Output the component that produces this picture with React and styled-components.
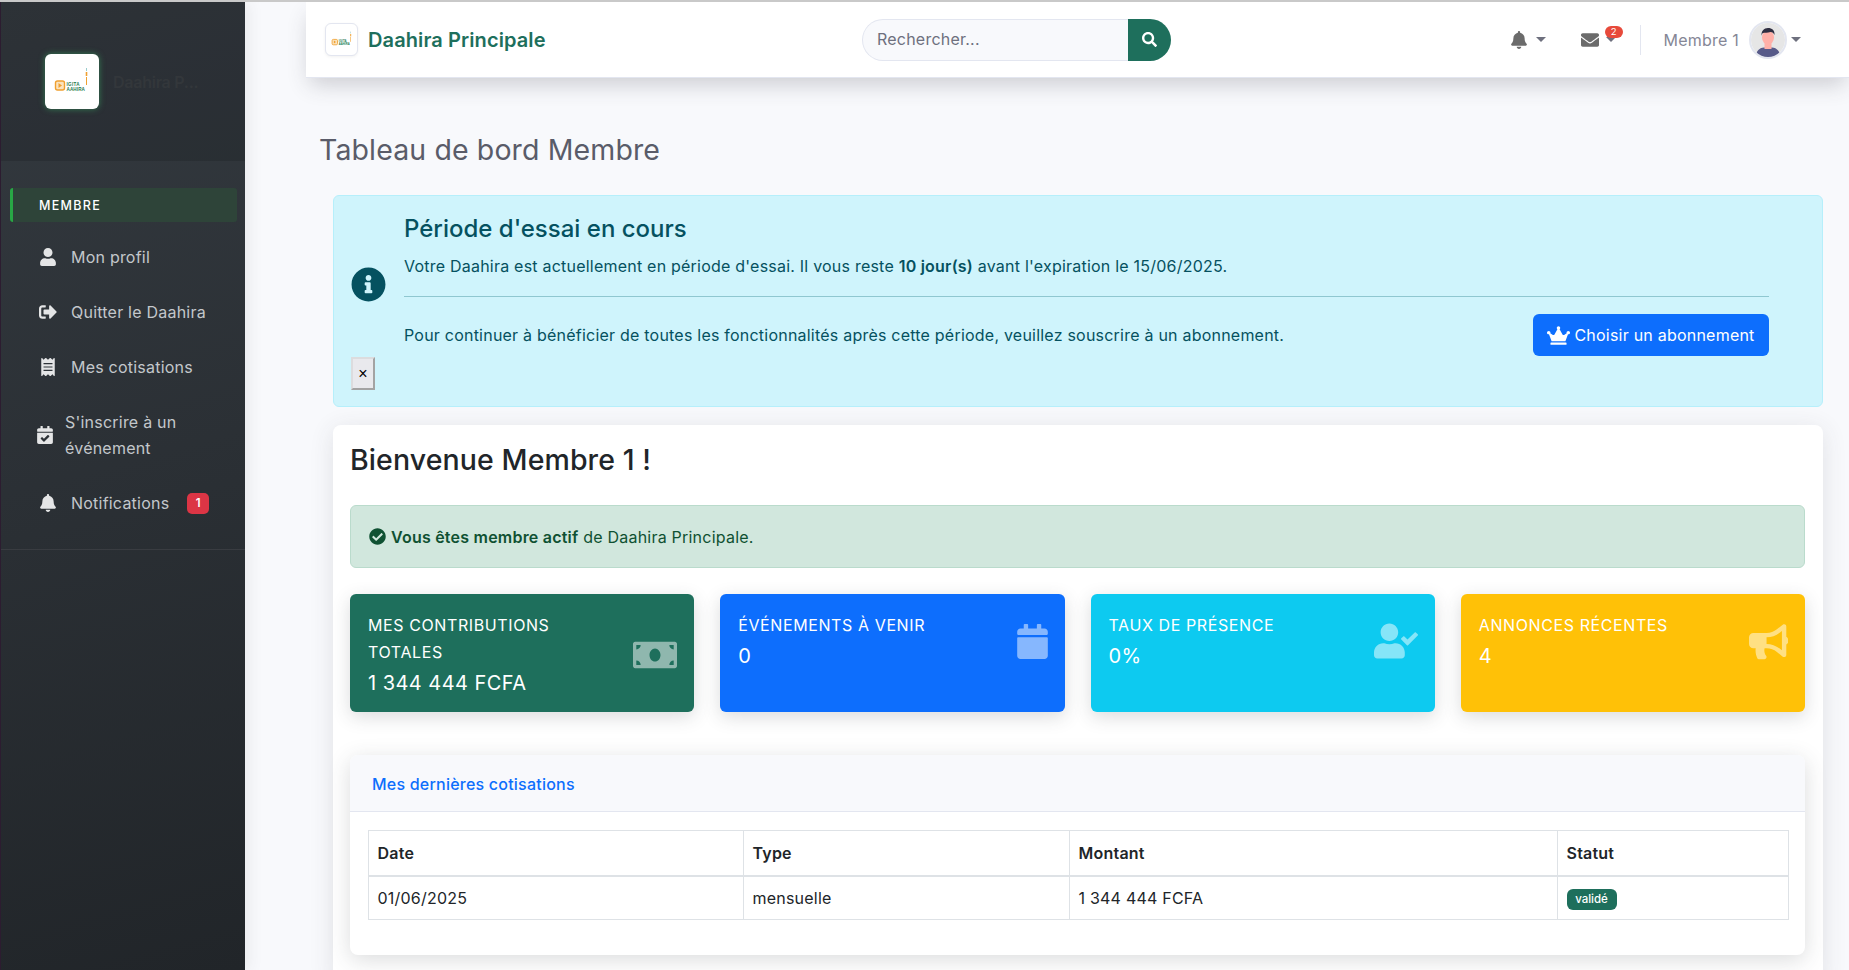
import React from "react";
import styled, { createGlobalStyle } from "styled-components";
import {
  FaUser, FaSignOutAlt, FaReceipt, FaCalendarCheck, FaBell, FaEnvelope, FaSearch,
  FaInfoCircle, FaCrown, FaCheckCircle, FaMoneyBill, FaCalendar, FaUserCheck, FaBullhorn,
} from "react-icons/fa";

const GREEN = "#1e6f5c";

const Global = createGlobalStyle`
  * { box-sizing: border-box; }
  html, body { margin: 0; padding: 0; height: 100%; overflow: hidden; }
  body {
    font-family: Inter, "Noto Sans", "Liberation Sans", sans-serif;
    font-size: 16px;
    letter-spacing: 0.22px;
    line-height: 26px;
    color: #212529;
    background: #f8f9fc;
  }
`;

const Shell = styled.div`
  display: flex;
  height: 970px;
  width: 1849px;
  overflow: hidden;
  border-top: 2px solid #c9c9c9;
`;

const Sidebar = styled.aside`
  flex: 0 0 245px;
  display: flex;
  flex-direction: column;
  border-left: 1px solid #2c1c30;
  background: linear-gradient(165deg, #343a40 0%, #212529 100%);
  box-shadow: 4px 0 14px rgba(58, 59, 69, 0.08);
  z-index: 1;
`;

const SideHeader = styled.div`
  height: 159px;
  display: flex;
  align-items: center;
  gap: 14px;
  padding-left: 44px;
  background: rgba(0, 0, 0, 0.13);
`;

const SideLogo = styled.div`
  width: 54px;
  height: 55px;
  border-radius: 6px;
  background: #fff;
  display: flex;
  align-items: center;
  justify-content: center;
  box-shadow: 0 0 6px rgba(60, 190, 110, 0.55);
`;

const SideTitle = styled.span`
  color: #33373b;
  font-weight: 600;
  font-size: 16px;
  letter-spacing: -0.25px;
`;

const SideMenu = styled.nav`
  padding: 27px 8px 0 9px;
  display: flex;
  flex-direction: column;
`;

const SectionLabel = styled.div`
  height: 34px;
  display: flex;
  align-items: center;
  padding: 1px 0 0 26px;
  border-left: 3px solid #28a745;
  border-radius: 3px;
  background: #2e4439;
  color: #fff;
  font-size: 12.5px;
  font-weight: 500;
  letter-spacing: 1.3px;
  margin-bottom: 7.5px;
`;

const MenuItem = styled.a`
  display: flex;
  align-items: center;
  padding: 14.5px 8px 14.5px ${(p) => p.$indent}px;
  color: #c3c7cb;
  font-size: 16px;
  line-height: 26px;
`;

const MenuIcon = styled.span`
  flex: 0 0 ${(p) => p.$w}px;
  display: flex;
  color: #e4e5e6;
  font-size: 18px;
`;

const MenuBadge = styled.span`
  margin-left: 18px;
  width: 22px;
  height: 21px;
  border-radius: 5px;
  background: #dc3545;
  color: #fff;
  font-size: 11.5px;
  font-weight: 600;
  line-height: 21px;
  text-align: center;
`;

const SideDivider = styled.hr`
  border: 0;
  border-top: 1px solid #393c41;
  margin: 18px 0 0 0;
  width: 100%;
`;

const Main = styled.main`
  flex: 1;
  min-width: 0;
  background: #f8f9fc;
  display: flex;
  flex-direction: column;
`;

const Topbar = styled.header`
  height: 76px;
  margin-left: 61px;
  flex: 0 0 76px;
  background: #fff;
  display: flex;
  align-items: center;
  padding: 0 48px 0 19px;
  border-bottom: 1px solid #e3e6f0;
  box-shadow: 0 10px 22px -4px rgba(58, 59, 69, 0.24);
  position: relative;
`;

const Brand = styled.div`
  flex: 0 0 537px;
  display: flex;
  align-items: center;
  gap: 10px;
  color: ${GREEN};
  font-size: 20px;
  font-weight: 600;
  letter-spacing: 0.1px;
`;

const BrandName = styled.span`
  padding-top: 1px;
`;

const BrandLogo = styled.div`
  width: 33px;
  height: 33px;
  border: 1px solid #e3e6f0;
  border-radius: 6px;
  background: #fff;
  display: flex;
  align-items: center;
  justify-content: center;
  box-shadow: 0 1px 3px rgba(0, 0, 0, 0.06);
`;

const Search = styled.form`
  display: flex;
  width: 309px;
  height: 42px;
  margin: 0;
`;

const SearchInput = styled.input`
  flex: 1;
  min-width: 0;
  border: 1px solid #e3e6f0;
  border-right: 0;
  border-radius: 21px 0 0 21px;
  background: #f8f9fc;
  padding: 0 14px 2px;
  font: inherit;
  letter-spacing: inherit;
  &::placeholder { color: #6e707e; opacity: 1; }
`;

const SearchButton = styled.button`
  flex: 0 0 43px;
  border: 0;
  border-radius: 0 21px 21px 0;
  background: ${GREEN};
  color: #fff;
  display: flex;
  align-items: center;
  justify-content: center;
  font-size: 15px;
`;

const TopRight = styled.div`
  margin-left: auto;
  display: flex;
  align-items: center;
  color: #6b6b6b;
`;

const IconDrop = styled.div`
  display: flex;
  align-items: center;
  position: relative;
  font-size: 18px;
  margin-right: ${(p) => p.$gap}px;
`;

const Caret = styled.span`
  width: 0;
  height: 0;
  margin-left: ${(p) => p.$ml}px;
  border-left: 5.2px solid transparent;
  border-right: 5.2px solid transparent;
  border-top: 5.2px solid #6e707e;
`;

const CountBadge = styled.span`
  position: absolute;
  top: -5px;
  right: -7px;
  width: 18px;
  height: 12px;
  border-radius: 6px;
  background: #e74a3b;
  color: #fff;
  font-size: 9.5px;
  line-height: 12px;
  letter-spacing: 0;
  text-align: center;
`;

const TopDivider = styled.div`
  width: 1px;
  height: 30px;
  background: #e3e6f0;
  margin-right: 23px;
`;

const UserName = styled.span`
  color: #858796;
  font-size: 16px;
  margin-right: 10px;
`;

const Avatar = styled.div`
  width: 38px;
  height: 38px;
  border-radius: 50%;
  border: 2px solid #e3e6f0;
  overflow: hidden;
  display: flex;
`;

const Content = styled.div`
  flex: 1;
  min-height: 0;
  padding: 0 26px 0 13px;
  margin-left: 61px;
`;

const PageTitle = styled.h1`
  margin: 55px 0 28px;
  font-size: 28.5px;
  line-height: 34px;
  font-weight: 400;
  letter-spacing: 0.12px;
  color: #5a5c69;
`;

const TrialAlert = styled.section`
  margin-left: 14px;
  height: 212px;
  display: flex;
  border: 1px solid #b6effb;
  border-radius: 6px;
  background: #cff4fc;
  color: #055160;
`;

const TrialSide = styled.div`
  flex: 0 0 70px;
  padding-left: 17px;
  display: flex;
  flex-direction: column;
  align-items: flex-start;
`;

const TrialIcon = styled.span`
  display: flex;
  margin: 71px 0 55px 0;
  font-size: 35px;
`;

const CloseButton = styled.button`
  width: 24px;
  height: 33px;
  padding: 0;
  border-width: 2px;
  border-style: solid;
  border-color: #dcdcde #a3a3a3 #a3a3a3 #dcdcde;
  background: #e9e9ed;
  color: #000;
  font-family: Arial, "Liberation Sans", sans-serif;
  font-size: 16px;
`;

const TrialBody = styled.div`
  flex: 1;
  padding: 18px 53px 0 0;
`;

const TrialTitle = styled.h4`
  margin: 0 0 10px;
  font-size: 24px;
  line-height: 29px;
  font-weight: 500;
  letter-spacing: 0;
`;

const TrialText = styled.p`
  margin: 0;
  b { font-weight: 600; }
`;

const TrialRule = styled.hr`
  border: 0;
  border-top: 1px solid #8fc7d0;
  margin: 17px 0 17px;
`;

const TrialRow = styled.div`
  display: flex;
  align-items: center;
  justify-content: space-between;
`;

const SubscribeButton = styled.button`
  height: 42px;
  width: 236px;
  border: 0;
  border-radius: 6px;
  background: #0d6efd;
  color: #fff;
  font: inherit;
  letter-spacing: inherit;
  display: flex;
  align-items: center;
  justify-content: center;
  gap: 4px;
  white-space: nowrap;
`;

const Card = styled.section`
  margin: 18px 0 0 14px;
  height: 560px;
  padding: 18px 18px 0 17px;
  background: #fff;
  border-radius: 8px;
  box-shadow: 0 4px 24px rgba(58, 59, 69, 0.12);
`;

const Welcome = styled.h2`
  margin: 0 0 28px;
  font-size: 28.5px;
  line-height: 34px;
  font-weight: 500;
  letter-spacing: 0.1px;
  color: #212529;
`;

const ActiveAlert = styled.div`
  height: 63px;
  display: flex;
  align-items: center;
  gap: 5px;
  padding-left: 18px;
  border: 1px solid #badbcc;
  border-radius: 6px;
  background: #d1e7dd;
  color: #0f5132;
  b { font-weight: 600; }
`;

const StatGrid = styled.div`
  margin-top: 26px;
  display: grid;
  grid-template-columns: repeat(4, 1fr);
  gap: 26px;
`;

const StatCard = styled.div`
  height: 118px;
  padding: 18px 17px 17px 18px;
  border-radius: 6px;
  background: ${(p) => p.$bg};
  color: #fff;
  box-shadow: 0 5px 18px rgba(58, 59, 69, 0.18);
`;

const StatInner = styled.div`
  display: flex;
  align-items: center;
  justify-content: space-between;
`;

const StatTitle = styled.div`
  font-size: 16px;
  line-height: 27px;
  letter-spacing: 0.6px;
  text-transform: uppercase;
  max-width: 215px;
`;

const StatValue = styled.div`
  margin-top: 1.5px;
  font-size: 20px;
  line-height: 30px;
  font-weight: 400;
  letter-spacing: 0.45px;
`;

const StatIcon = styled.span`
  display: flex;
  font-size: ${(p) => p.$size}px;
  margin-right: ${(p) => p.$nudge}px;
  color: rgba(255, 255, 255, 0.5);
`;

const TableCard = styled.div`
  margin-top: 43px;
  height: 200px;
  border-radius: 8px;
  background: #fff;
  box-shadow: 0 5px 22px rgba(58, 59, 69, 0.18);
`;

const TableHead = styled.div`
  height: 57px;
  display: flex;
  align-items: center;
  padding: 1px 0 0 22px;
  background: #f8f9fc;
  border-bottom: 1px solid #e3e6f0;
  border-radius: 8px 8px 0 0;
  color: #0d6efd;
  font-weight: 500;
`;

const TableBody = styled.div`
  padding: 18px;
`;

const Table = styled.table`
  width: 100%;
  table-layout: fixed;
  border-collapse: collapse;
  border: 1px solid #dee2e6;
`;

const Col = styled.col`
  width: ${(p) => p.$w}px;
`;

const Th = styled.th`
  height: 45px;
  padding: 0 8.5px;
  text-align: left;
  font-weight: 600;
  border: 1px solid #dee2e6;
  border-bottom-width: 2px;
`;

const Td = styled.td`
  height: 44px;
  padding: 0 8.5px;
  border: 1px solid #dee2e6;
`;

const Status = styled.span`
  display: inline-block;
  width: 50px;
  height: 21px;
  border-radius: 6px;
  background: ${GREEN};
  color: #fff;
  font-size: 11.5px;
  font-weight: 500;
  line-height: 21px;
  letter-spacing: 0;
  text-align: center;
  vertical-align: middle;
`;

const LogoMark = ({ w }) => (
  <svg width={w} height={w} viewBox="0 0 40 40">
    <rect x="3.500" y="19" width="9" height="9" rx="2" fill="#fbe3bd" stroke="#f0a030" strokeWidth="1.400" />
    <path d="M6.500 21l3.500 2.500L6.500 26z" fill="#f0a030" />
    <text x="14.500" y="24" fontSize="4.600" fontWeight="700" letterSpacing="0.3" fill="#1e7a50" fontFamily="Liberation Sans">IGITA</text>
    <text x="14.500" y="28.800" fontSize="4.600" fontWeight="700" letterSpacing="0.1" fill="#1e7a50" fontFamily="Liberation Sans">AAHIRA</text>
    <rect x="34" y="6" width="1" height="3" fill="#9cc" />
    <rect x="33.700" y="10" width="1.600" height="4" fill="#f0a030" />
    <rect x="34" y="15" width="1" height="8" fill="#f0a030" />
  </svg>
);

const AvatarArt = () => (
  <svg width="34" height="34" viewBox="0 0 34 34">
    <rect width="34" height="34" fill="#e6e6e6" />
    <path d="M5 34c0-6 3-9 8-9.500h8c5 .5 8 3.500 8 9.500z" fill="#575a89" />
    <rect x="13.500" y="18" width="7" height="8" fill="#ffb0a8" />
    <ellipse cx="17" cy="14.500" rx="6" ry="7" fill="#ffb0a8" />
    <path d="M10.500 13c-.5-5 2.500-8 6.500-8s7 2.500 6.500 7c-1-2-2-3-4-3-3 1-6 .5-7.500 1-1 .5-1.500 2-1.500 3z" fill="#2f2e41" />
  </svg>
);

const items = [
  { icon: <FaUser />, label: "Mon profil", indent: 28.5, w: 32.5 },
  { icon: <FaSignOutAlt />, label: "Quitter le Daahira", indent: 28.5, w: 32.5 },
  { icon: <FaReceipt />, label: "Mes cotisations", indent: 28.5, w: 32.5 },
  { icon: <FaCalendarCheck />, label: "S'inscrire à un événement", indent: 25.5, w: 29.5 },
];

const stats = [
  { title: "Mes contributions totales", value: "1 344 444 FCFA", bg: GREEN, icon: <FaMoneyBill />, size: 44, nudge: 0 },
  { title: "Événements à venir", value: "0", bg: "#0d6efd", icon: <FaCalendar />, size: 35, nudge: -2 },
  { title: "Taux de présence", value: "0%", bg: "#0dcaf0", icon: <FaUserCheck />, size: 44, nudge: 0 },
  { title: "Annonces récentes", value: "4", bg: "#ffc107", icon: <FaBullhorn />, size: 39.5, nudge: 0 },
];

export default function App() {
  return (
    <>
      <Global />
      <Shell>
        <Sidebar>
          <SideHeader>
            <SideLogo><LogoMark w={40} /></SideLogo>
            <SideTitle>Daahira P...</SideTitle>
          </SideHeader>
          <SideMenu>
            <SectionLabel>MEMBRE</SectionLabel>
            {items.map((it) => (
              <MenuItem key={it.label} $indent={it.indent}>
                <MenuIcon $w={it.w}>{it.icon}</MenuIcon>
                <span>{it.label}</span>
              </MenuItem>
            ))}
            <MenuItem $indent={28.5}>
              <MenuIcon $w={32.5}><FaBell /></MenuIcon>
              <span>Notifications</span>
              <MenuBadge>1</MenuBadge>
            </MenuItem>
          </SideMenu>
          <SideDivider />
        </Sidebar>
        <Main>
          <Topbar>
            <Brand>
              <BrandLogo><LogoMark w={24} /></BrandLogo>
              <BrandName>Daahira Principale</BrandName>
            </Brand>
            <Search>
              <SearchInput placeholder="Rechercher..." />
              <SearchButton type="button"><FaSearch /></SearchButton>
            </Search>
            <TopRight>
              <IconDrop $gap={35}>
                <FaBell /><Caret $ml={8} />
              </IconDrop>
              <IconDrop $gap={24}>
                <FaEnvelope /><Caret $ml={7} />
                <CountBadge>2</CountBadge>
              </IconDrop>
              <TopDivider />
              <UserName>Membre 1</UserName>
              <Avatar><AvatarArt /></Avatar>
              <Caret $ml={4} />
            </TopRight>
          </Topbar>
          <Content>
            <PageTitle>Tableau de bord Membre</PageTitle>
            <TrialAlert>
              <TrialSide>
                <TrialIcon><FaInfoCircle /></TrialIcon>
                <CloseButton type="button">×</CloseButton>
              </TrialSide>
              <TrialBody>
                <TrialTitle>Période d'essai en cours</TrialTitle>
                <TrialText>
                  Votre Daahira est actuellement en période d'essai. Il vous reste <b>10 jour(s)</b> avant l'expiration le 15/06/2025.
                </TrialText>
                <TrialRule />
                <TrialRow>
                  <TrialText>Pour continuer à bénéficier de toutes les fonctionnalités après cette période, veuillez souscrire à un abonnement.</TrialText>
                  <SubscribeButton type="button"><FaCrown size={23} /> Choisir un abonnement</SubscribeButton>
                </TrialRow>
              </TrialBody>
            </TrialAlert>
            <Card>
              <Welcome>Bienvenue Membre 1 !</Welcome>
              <ActiveAlert>
                <FaCheckCircle size={17} />
                <span><b>Vous êtes membre actif</b> de Daahira Principale.</span>
              </ActiveAlert>
              <StatGrid>
                {stats.map((s) => (
                  <StatCard key={s.title} $bg={s.bg}>
                    <StatInner>
                      <div>
                        <StatTitle>{s.title}</StatTitle>
                        <StatValue>{s.value}</StatValue>
                      </div>
                      <StatIcon $size={s.size} $nudge={s.nudge}>{s.icon}</StatIcon>
                    </StatInner>
                  </StatCard>
                ))}
              </StatGrid>
              <TableCard>
                <TableHead>Mes dernières cotisations</TableHead>
                <TableBody>
                  <Table>
                    <colgroup>
                      <Col $w={375} /><Col $w={326} /><Col $w={488} /><Col $w={231} />
                    </colgroup>
                    <thead>
                      <tr><Th>Date</Th><Th>Type</Th><Th>Montant</Th><Th>Statut</Th></tr>
                    </thead>
                    <tbody>
                      <tr>
                        <Td>01/06/2025</Td><Td>mensuelle</Td><Td>1 344 444 FCFA</Td>
                        <Td><Status>validé</Status></Td>
                      </tr>
                    </tbody>
                  </Table>
                </TableBody>
              </TableCard>
            </Card>
          </Content>
        </Main>
      </Shell>
    </>
  );
}
